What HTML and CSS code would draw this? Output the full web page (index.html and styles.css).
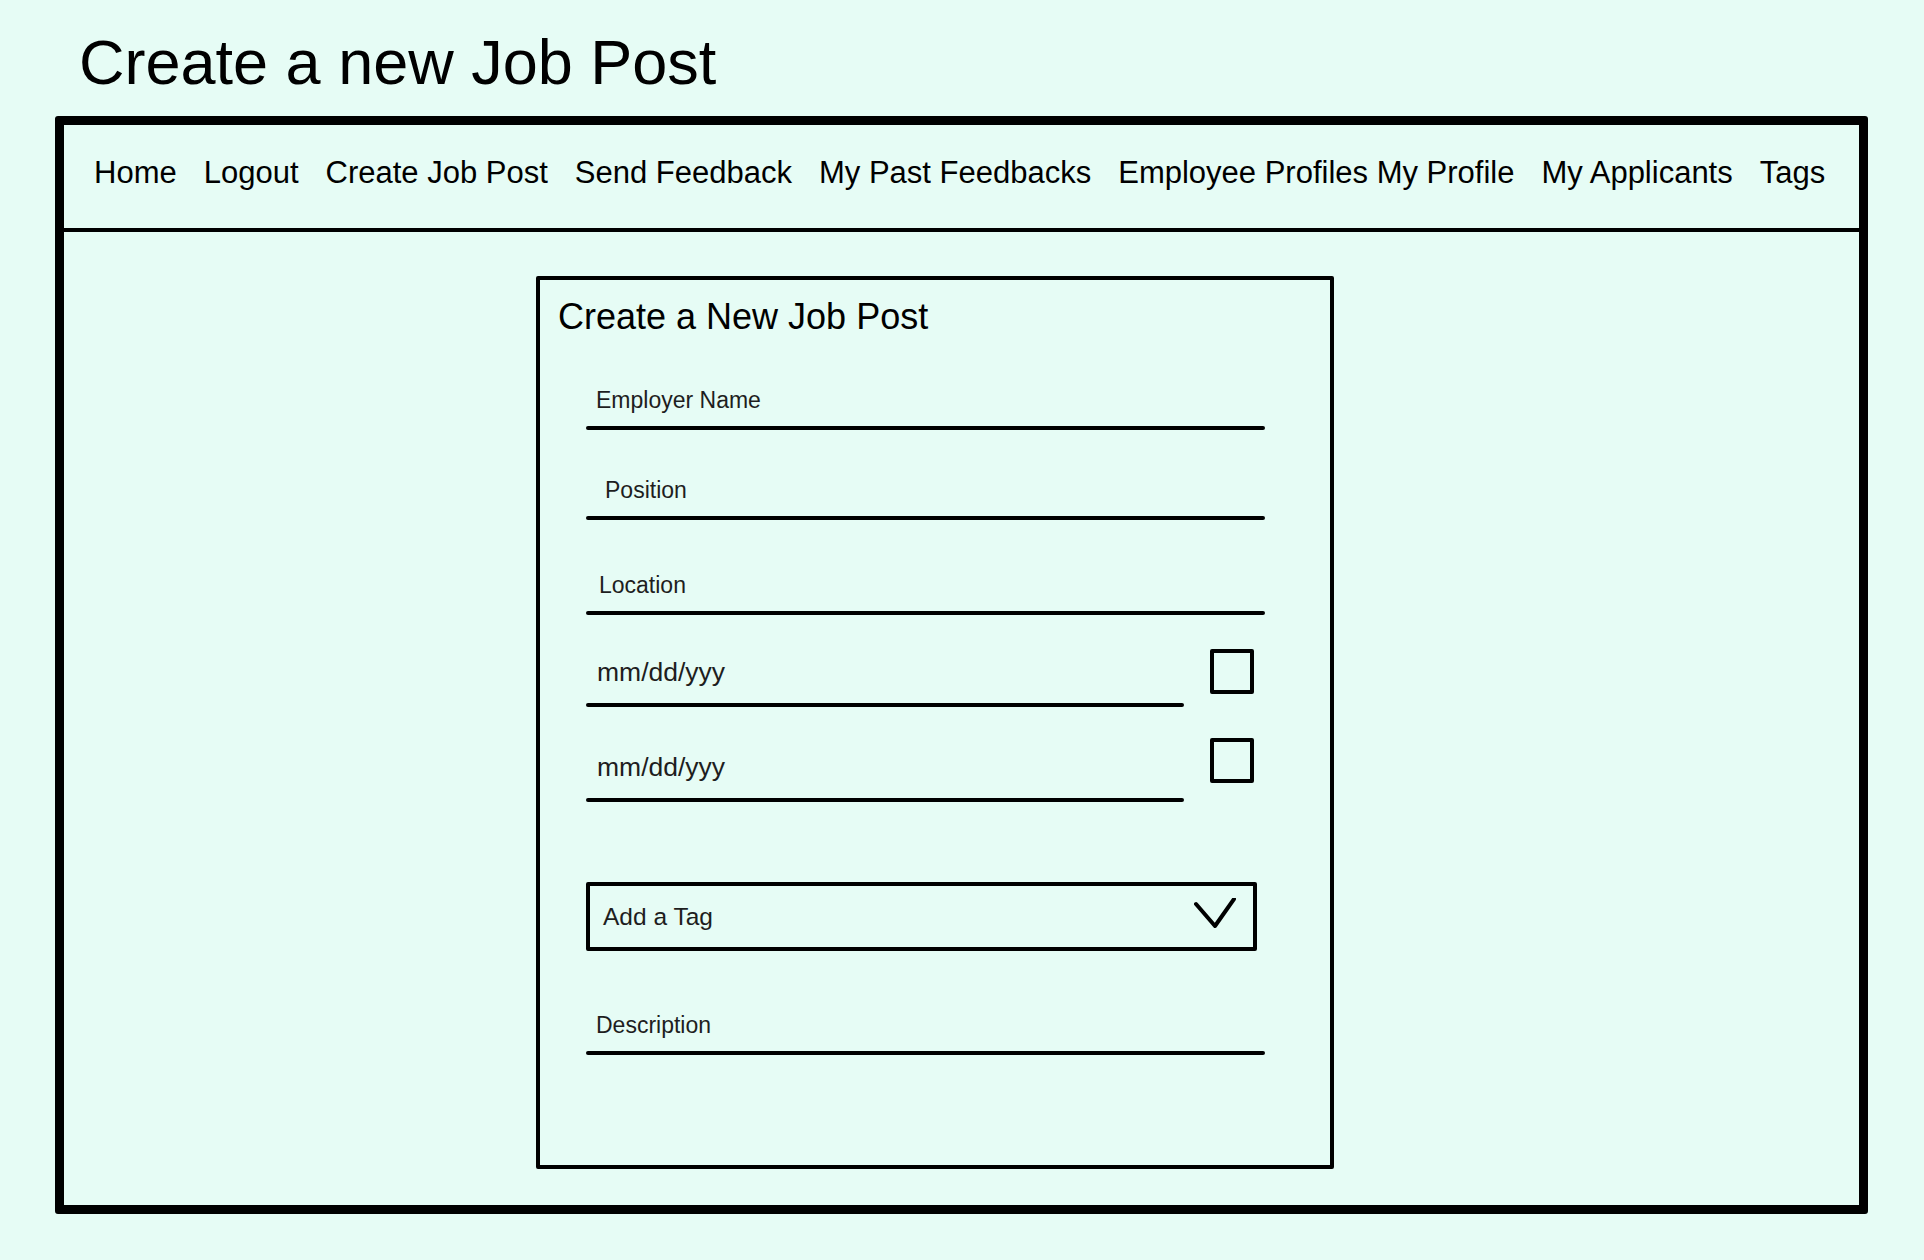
FILE: index.html
```html
<!DOCTYPE html>
<html lang="en">
<head>
  <meta charset="UTF-8">
  <title>Create a new Job Post</title>
  <link rel="stylesheet" href="styles.css">
</head>
<body>
  <h1 class="page-title">Create a new Job Post</h1>

  <div class="frame">
    <nav class="top-nav">
      <a href="#">Home</a>
      <a href="#">Logout</a>
      <a href="#">Create Job Post</a>
      <a href="#">Send Feedback</a>
      <a href="#">My Past Feedbacks</a>
      <span class="nav-pair"><a href="#">Employee Profiles</a> <a href="#">My Profile</a></span>
      <a href="#">My Applicants</a>
      <a href="#">Tags</a>
    </nav>

    <div class="main">
      <form class="card">
        <h2 class="card-title">Create a New Job Post</h2>

        <div class="fields">
          <div class="field field-first">
            <div class="field-label">Employer Name</div>
            <div class="line"></div>
          </div>

          <div class="field field-second">
            <div class="field-label indent-wide">Position</div>
            <div class="line"></div>
          </div>

          <div class="field field-third">
            <div class="field-label indent-mid">Location</div>
            <div class="line"></div>
          </div>

          <div class="date-row date-row-first">
            <div class="date-field">
              <div class="date-text">mm/dd/yyy</div>
              <div class="line"></div>
            </div>
            <div class="check-box"></div>
          </div>

          <div class="date-row date-row-second">
            <div class="date-field">
              <div class="date-text">mm/dd/yyy</div>
              <div class="line"></div>
            </div>
            <div class="check-box"></div>
          </div>

          <div class="tag-select">
            <span>Add a Tag</span>
            <svg class="chevron" width="42" height="30" viewBox="0 0 42 30">
              <polyline points="2,6 21,28 40,1" fill="none" stroke="#000" stroke-width="4" stroke-linecap="round" stroke-linejoin="round"/>
            </svg>
          </div>

          <div class="field field-desc">
            <div class="field-label">Description</div>
            <div class="line"></div>
          </div>
        </div>
      </form>
    </div>
  </div>
</body>
</html>
```

FILE: styles.css
```css
body {
  margin: 0;
  padding: 26px 56px 45px 55px;
  background: #e6fcf5;
  color: #000;
  font-family: "Liberation Sans", Arial, sans-serif;
}

.page-title {
  margin: 0 0 18px 24px;
  font-size: 63px;
  font-weight: normal;
  line-height: 72px;
}

.frame {
  border: 9px solid #000;
  border-radius: 3px;
}

.top-nav {
  display: flex;
  gap: 27px;
  padding: 30px 0 37px 30px;
  border-bottom: 4px solid #000;
  font-size: 31px;
  line-height: 36px;
}

.top-nav a {
  color: #000;
  text-decoration: none;
}

.main {
  padding: 44px 0 36px 472px;
}

.card {
  width: 790px;
  padding: 16px 0 110px;
  border: 4px solid #000;
  border-radius: 2px;
}

.card-title {
  margin: 0 0 0 18px;
  font-size: 36px;
  font-weight: normal;
  line-height: 42px;
}

.fields {
  margin-left: 46px;
  width: 679px;
}

.field-label {
  padding-left: 10px;
  font-size: 23px;
  line-height: 26px;
  color: #1e1e1e;
}

.field-label.indent-wide {
  padding-left: 19px;
}

.field-label.indent-mid {
  padding-left: 13px;
}

.line {
  height: 4px;
  margin-top: 13px;
  background: #000;
  border-radius: 2px;
}

.field-first {
  margin-top: 49px;
}

.field-second {
  margin-top: 47px;
}

.field-third {
  margin-top: 52px;
}

.date-row {
  display: flex;
  align-items: flex-start;
  gap: 26px;
}

.date-row-first {
  margin-top: 43px;
}

.date-row-second {
  margin-top: 46px;
}

.date-field {
  width: 598px;
}

.date-text {
  padding-left: 11px;
  font-size: 26.5px;
  line-height: 28px;
  color: #1e1e1e;
}

.date-field .line {
  margin-top: 17px;
}

.check-box {
  width: 36px;
  height: 37px;
  border: 4px solid #000;
  border-radius: 2px;
}

.date-row-first .check-box {
  margin-top: -9px;
}

.date-row-second .check-box {
  margin-top: -15px;
}

.tag-select {
  display: flex;
  align-items: center;
  justify-content: space-between;
  box-sizing: border-box;
  width: 671px;
  height: 69px;
  margin-top: 80px;
  padding: 0 17px 0 13px;
  border: 4px solid #000;
  border-radius: 2px;
  font-size: 24.5px;
  line-height: 26px;
  color: #1e1e1e;
}

.chevron {
  margin-bottom: 8px;
}

.field-desc {
  margin-top: 61px;
}
```
